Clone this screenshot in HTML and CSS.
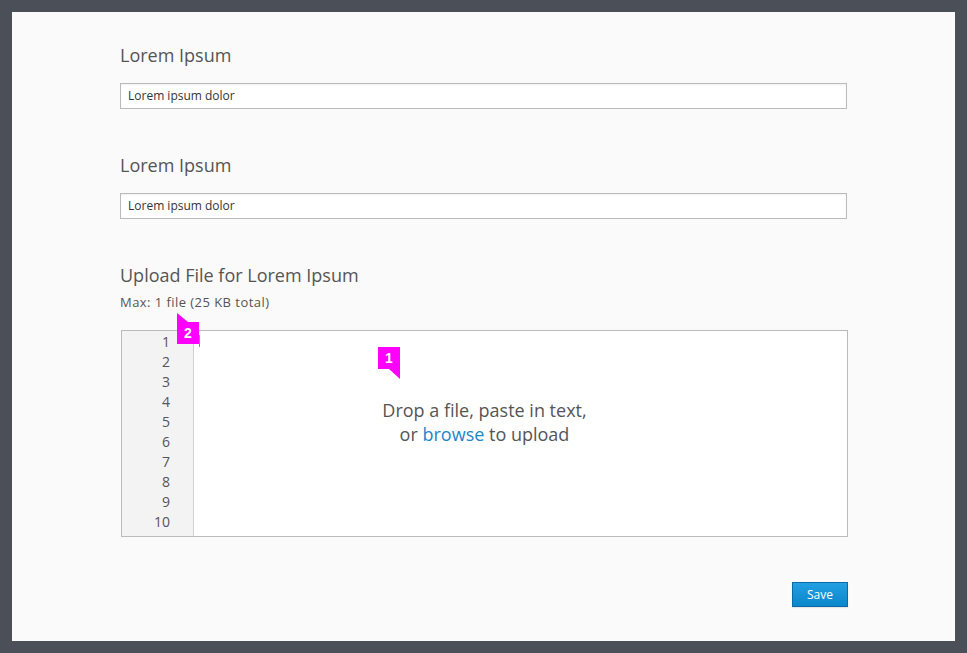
FILE: index.html
```html
<!DOCTYPE html>
<html>
<head>
<meta charset="utf-8">
<link rel="stylesheet" href="styles.css">
</head>
<body>
<div class="panel">
  <div class="form">
    <div class="field">
      <h2 class="label">Lorem Ipsum</h2>
      <div class="input">Lorem ipsum dolor</div>
    </div>
    <div class="field">
      <h2 class="label">Lorem Ipsum</h2>
      <div class="input">Lorem ipsum dolor</div>
    </div>
    <div class="field upload">
      <h2 class="label">Upload File for Lorem Ipsum</h2>
      <div class="hint">Max: 1 file (25 KB total)</div>
      <div class="editor">
        <div class="gutter">
          <span>1</span><span>2</span><span>3</span><span>4</span><span>5</span>
          <span>6</span><span>7</span><span>8</span><span>9</span><span>10</span>
        </div>
        <div class="content">
          <span class="cursor"></span>
          <div class="drop">Drop a file, paste in text,<br>or <span class="link">browse</span> to upload</div>
        </div>
        <div class="badge badge-2">2</div>
        <div class="badge badge-1">1</div>
      </div>
    </div>
    <div class="actions">
      <button class="save">Save</button>
    </div>
  </div>
</div>
</body>
</html>
```
FILE: styles.css
```css
html, body {
  margin: 0;
  padding: 0;
}
body {
  background: #4b5058;
  font-family: "Open Sans", "Noto Sans", sans-serif;
  color: #555;
  padding: 12px;
  width: 943px;
  height: 629px;
}
.panel {
  background: #fafafa;
  width: 943px;
  height: 629px;
  box-sizing: border-box;
  padding: 30px 0 0 108px;
}
.form {
  width: 728px;
  display: flex;
  flex-direction: column;
}
.field {
  display: flex;
  flex-direction: column;
  margin-bottom: 43px;
}
.label {
  margin: 0;
  font-size: 18px;
  font-weight: 400;
  line-height: 26px;
  color: #555;
  height: 26px;
  margin-bottom: 15px;
}
.input {
  width: 727px;
  height: 26px;
  box-sizing: border-box;
  border: 1px solid #bbb;
  background: #fff;
  font-size: 12px;
  line-height: 24px;
  padding-left: 7px;
  color: #333;
  box-shadow: inset 0 1px 2px rgba(0,0,0,0.06);
}
.upload {
  margin-bottom: 0;
}
.upload .label {
  margin-bottom: 6px;
}
.hint {
  font-size: 13px;
  letter-spacing: 0.45px;
  line-height: 16px;
  height: 16px;
  color: #555;
  margin-bottom: 20px;
}
.editor {
  position: relative;
  margin-left: 1px;
  width: 727px;
  height: 207px;
  box-sizing: border-box;
  border: 1px solid #bbb;
  background: #fff;
  display: flex;
}
.gutter {
  width: 72px;
  box-sizing: border-box;
  background: #f3f3f3;
  border-right: 1px solid #d0d0d0;
  display: flex;
  flex-direction: column;
  align-items: flex-end;
  padding: 1px 23px 0 0;
  font-size: 14px;
  line-height: 20px;
  color: #555;
}
.content {
  flex: 1;
  position: relative;
  display: flex;
  justify-content: center;
}
.cursor {
  position: absolute;
  left: 5px;
  top: 4px;
  width: 1px;
  height: 12px;
  background: #888;
}
.drop {
  margin-top: 67px;
  margin-left: -72px;
  text-align: center;
  font-size: 18px;
  line-height: 24px;
  color: #555;
}
.link {
  color: #1b87c9;
}
.badge {
  position: absolute;
  width: 22px;
  height: 22px;
  background: #ff00ff;
  color: #fff;
  font-family: "Liberation Sans", Arial, sans-serif;
  font-weight: 700;
  font-size: 14px;
  line-height: 22px;
  text-align: center;
}
.badge::after {
  content: "";
  position: absolute;
  width: 0;
  height: 0;
}
.badge-2 {
  left: 55px;
  top: -9px;
}
.badge-2::after {
  left: 0;
  top: -9px;
  border-left: 11px solid #ff00ff;
  border-top: 9px solid transparent;
}
.badge-1 {
  left: 256px;
  top: 16px;
}
.badge-1::after {
  right: 0;
  top: 22px;
  border-right: 11px solid #ff00ff;
  border-bottom: 10px solid transparent;
}
.actions {
  display: flex;
  justify-content: flex-end;
  margin-top: 45px;
}
.save {
  width: 56px;
  height: 25px;
  border: 1px solid #0b6aa6;
  background: linear-gradient(#22a0e2, #0a86cb);
  color: #fff;
  font-family: "Open Sans", "Noto Sans", sans-serif;
  font-size: 12px;
  padding: 0;
  box-shadow: 0 1px 1px rgba(0,0,0,0.08);
}
```
